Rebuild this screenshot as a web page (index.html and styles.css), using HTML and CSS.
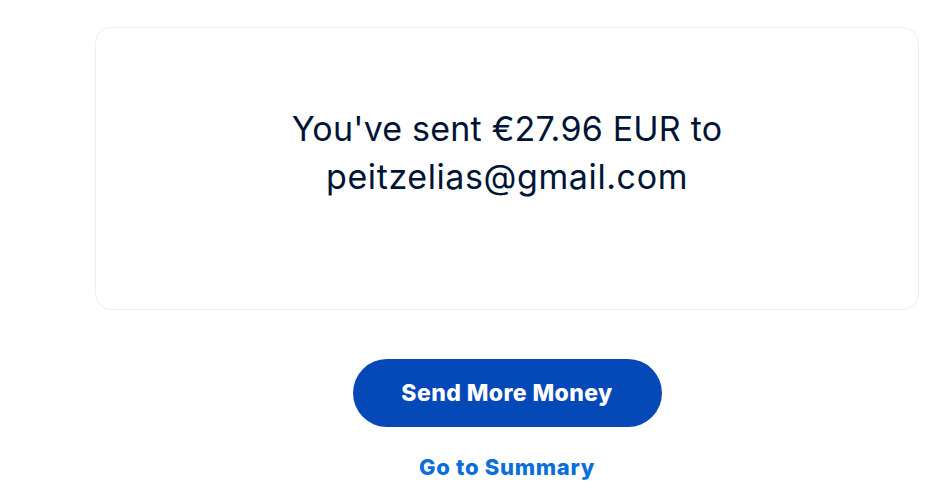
FILE: index.html
```html
<!DOCTYPE html>
<html>
<head>
<meta charset="utf-8">
<link rel="stylesheet" href="styles.css">
</head>
<body>
<main class="page">
  <section class="card">
    <h1 class="message">You've sent €27.96 EUR to<br><span class="email">peitzelias@gmail.com</span></h1>
  </section>
  <div class="actions">
    <button class="primary">Send More Money</button>
    <a class="link" href="#">Go to Summary</a>
  </div>
</main>
</body>
</html>
```
FILE: styles.css
```css
html, body {
  margin: 0;
  padding: 0;
  background: #ffffff;
}
body {
  font-family: Inter, "Noto Sans", "Liberation Sans", sans-serif;
}
.page {
  padding: 27px 29px 0 95px;
  display: flex;
  flex-direction: column;
  align-items: stretch;
}
.card {
  box-sizing: border-box;
  height: 283px;
  border: 1px solid #eeeeee;
  border-radius: 16px;
  padding-top: 77px;
  text-align: center;
}
.message {
  margin: 0;
  font-weight: 400;
  font-size: 34px;
  line-height: 48px;
  color: #001435;
  letter-spacing: 0.2px;
}
.email {
  letter-spacing: 0.6px;
}
.actions {
  display: flex;
  flex-direction: column;
  align-items: center;
  margin-top: 49px;
}
.primary {
  width: 309px;
  height: 68px;
  border: none;
  border-radius: 34px;
  background: #0548b8;
  color: #ffffff;
  font-family: Inter, "Noto Sans", "Liberation Sans", sans-serif;
  font-weight: 800;
  font-size: 23px;
  letter-spacing: 0.4px;
}
.link {
  margin-top: 27px;
  color: #0a6fd8;
  font-weight: 800;
  font-size: 22px;
  text-decoration: none;
  letter-spacing: 0.7px;
}
```
